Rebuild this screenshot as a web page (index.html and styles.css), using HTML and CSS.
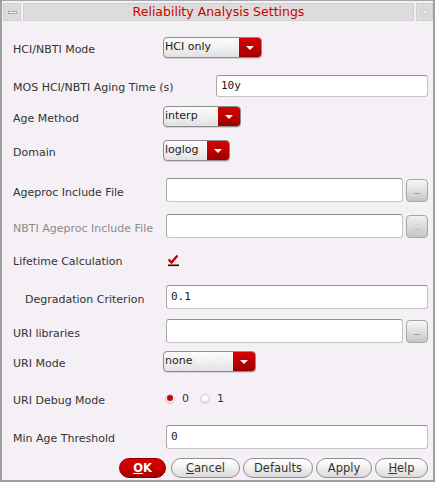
FILE: index.html
```html
<!DOCTYPE html>
<html>
<head>
<meta charset="utf-8">
<link rel="stylesheet" href="styles.css">
</head>
<body>
<div class="window">
  <div class="titlebar">
    <div class="tb-btn tb-min"><span class="dash"></span></div>
    <div class="tb-title">Reliability Analysis Settings</div>
    <div class="tb-btn tb-close">
      <svg width="12" height="12" viewBox="0 0 12 12"><path d="M2 2 L10 10 M10 2 L2 10" stroke="#c4c4c4" stroke-width="3" stroke-dasharray="1.5 1" fill="none"/><path d="M2 2 L10 10 M10 2 L2 10" stroke="#f2f2f2" stroke-width="1" fill="none"/></svg>
    </div>
  </div>
  <div class="form">
    <div class="label">HCI/NBTI Mode</div>
    <div class="ctl"><div class="combo w-hci"><span class="combo-text">HCI only</span><span class="combo-arrow"></span></div></div>

    <div class="label">MOS HCI/NBTI Aging Time (s)</div>
    <div class="ctl"><div class="field field-narrow">10y</div></div>

    <div class="label">Age Method</div>
    <div class="ctl"><div class="combo w-interp"><span class="combo-text">interp</span><span class="combo-arrow"></span></div></div>

    <div class="label">Domain</div>
    <div class="ctl"><div class="combo w-loglog"><span class="combo-text">loglog</span><span class="combo-arrow"></span></div></div>

    <div class="label">Ageproc Include File</div>
    <div class="ctl"><div class="field field-browse"></div><div class="browse">...</div></div>

    <div class="label disabled">NBTI Ageproc Include File</div>
    <div class="ctl"><div class="field field-browse"></div><div class="browse browse-dis">...</div></div>

    <div class="label">Lifetime Calculation</div>
    <div class="ctl"><svg class="check" width="13" height="13" viewBox="0 0 13 13"><path d="M1.5 5.5 L4.5 8.5 L10.5 1.5" stroke="#d00000" stroke-width="2.4" fill="none"/><rect x="1" y="10.5" width="11" height="1.6" fill="#3a0000"/></svg></div>

    <div class="label indent">Degradation Criterion</div>
    <div class="ctl"><div class="field field-full">0.1</div></div>

    <div class="label">URI libraries</div>
    <div class="ctl"><div class="field field-browse"></div><div class="browse">...</div></div>

    <div class="label">URI Mode</div>
    <div class="ctl"><div class="combo w-none"><span class="combo-text">none</span><span class="combo-arrow"></span></div></div>

    <div class="label">URI Debug Mode</div>
    <div class="ctl radios">
      <span class="radio on"></span><span class="rlabel">0</span>
      <span class="radio"></span><span class="rlabel">1</span>
    </div>

    <div class="label">Min Age Threshold</div>
    <div class="ctl"><div class="field field-full">0</div></div>

    <div class="buttons">
      <div class="btn btn-ok"><u>O</u>K</div>
      <div class="btn btn-cancel"><u>C</u>ancel</div>
      <div class="btn btn-defaults">Defaults</div>
      <div class="btn btn-apply">Apply</div>
      <div class="btn btn-help"><u>H</u>elp</div>
    </div>
  </div>
</div>
</body>
</html>
```
FILE: styles.css
```css
* { box-sizing: border-box; }
html, body { margin: 0; padding: 0; }
body {
  width: 435px;
  height: 482px;
  overflow: hidden;
  font-family: "DejaVu Sans", sans-serif;
  font-size: 11px;
  color: #333333;
  background: #f4f0f6;
}
.window {
  width: 435px;
  height: 482px;
  border-top: 1px solid #a6a6a6;
  border-left: 2px solid #a0a0a0;
  border-right: 2px solid #a0a0a0;
  border-bottom: 2px solid #a0a0a0;
  background: #f4f0f6;
  display: flex;
  flex-direction: column;
  overflow: hidden;
}
.titlebar {
  height: 20px;
  display: flex;
  gap: 2px;
  padding: 2px 0 0 1px;
  background: #f4f0f6;
  flex: none;
}
.tb-btn, .tb-title {
  background: #dcdcdc;
  border: 1px solid #d0d0d0;
  height: 18px;
}
.tb-btn {
  width: 18px;
  display: flex;
  align-items: center;
  justify-content: center;
}
.tb-min { width: 18px; }
.tb-close { width: 17px; }
.dash {
  width: 9px;
  height: 3px;
  background: #f6f6f6;
  border: 1px solid #a8a8a8;
}
.tb-title {
  flex: 1;
  text-align: center;
  color: #cc0000;
  font-size: 12.5px;
  line-height: 16px;
}
.form {
  flex: 1;
  display: grid;
  grid-template-columns: 150px 1fr;
  grid-template-rows: 42px 35px 27px 41px 38px 34px 33px 42px 26px 34px 40px 37px 26px;
  padding: 5px 5px 0 11px;
}
.label {
  align-self: center;
  padding-top: 4px;
  white-space: nowrap;
  color: #333333;
}
.label.disabled { color: #8c8c8c; }
.label.indent { padding-left: 12px; }
.ctl {
  display: flex;
  align-items: center;
  min-width: 0;
}
.combo {
  height: 21px;
  border: 1px solid #8c8c8c;
  border-radius: 4px;
  display: flex;
  overflow: hidden;
  background:
    repeating-linear-gradient(45deg, rgba(0,0,0,0.025) 0 1px, transparent 1px 2px),
    linear-gradient(#ffffff, #f3f3f3 50%, #e4e4e4);
  box-shadow: 0 1px 0 rgba(0,0,0,0.12);
}
.combo-text {
  flex: 1;
  padding-left: 1px;
  line-height: 18px;
  font-size: 11px;
  color: #1a1a1a;
}
.combo-arrow {
  width: 22px;
  position: relative;
  background: linear-gradient(#d90000, #b80000 60%, #9a0000);
}
.combo-arrow::after {
  content: "";
  position: absolute;
  left: 7px;
  top: 8px;
  border-left: 4px solid transparent;
  border-right: 4px solid transparent;
  border-top: 4px solid #ffffff;
}
.w-hci { width: 99px; }
.w-interp { width: 78px; }
.w-loglog { width: 67px; }
.w-none { width: 93px; }
.field {
  height: 24px;
  background: #ffffff;
  border: 1px solid #c4c4c4;
  border-top-color: #8e8e8e;
  border-left-color: #a8a8a8;
  border-radius: 3px;
  font-family: "DejaVu Sans Mono", monospace;
  font-size: 11px;
  color: #1a1a1a;
  line-height: 22px;
  padding-left: 4px;
  margin-left: 3px;
}
.field-narrow { margin-left: 53px; flex: 1; height: 22px; line-height: 20px; }
.field-full { flex: 1; }
.field-browse { flex: 1; }
.browse {
  width: 22px;
  height: 23px;
  margin-left: 3px;
  border: 1px solid #a6a6a6;
  border-radius: 4px;
  background: linear-gradient(#f6f6f6, #dedede 55%, #c4c4c4);
  font-size: 8px;
  color: #5a5a5a;
  text-align: center;
  line-height: 24px;
}
.browse-dis { color: #a0a0a0; background: linear-gradient(#f0f0f0, #d8d8d8 55%, #c6c6c6); }
.check { margin-left: 4px; margin-top: 1px; }
.radios { gap: 0; padding-top: 1px; }
.radio {
  width: 10px;
  height: 10px;
  border-radius: 50%;
  margin-left: 2px;
  background: radial-gradient(circle at 50% 35%, #ffffff 30%, #e6e6e6 65%, #b4b4b4 100%);
  border: 1px solid #d2d2d2;
  position: relative;
}
.radio.on::after {
  content: "";
  position: absolute;
  left: 1px;
  top: 0px;
  width: 6px;
  height: 6px;
  border-radius: 50%;
  background: #cc0000;
}
.rlabel {
  margin-left: 7px;
  margin-right: 9px;
  color: #333333;
}
.buttons {
  grid-column: 1 / 3;
  display: flex;
  justify-content: flex-end;
  align-items: center;
  gap: 3px;
}
.btn {
  height: 20px;
  border-radius: 10px;
  border: 1px solid #8e8e8e;
  background: linear-gradient(#ffffff, #f2f2f2 45%, #dadada);
  text-align: center;
  line-height: 18px;
  color: #333333;
  font-size: 11.5px;
}
.btn-ok {
  width: 47px;
  margin-right: 2px;
  background: linear-gradient(#e00000, #c40000 50%, #a00000);
  border-color: #8a0000;
  color: #ffffff;
  font-weight: bold;
}
.btn-cancel { width: 69px; }
.btn-defaults { width: 70px; }
.btn-apply { width: 56px; }
.btn-help { width: 53px; }
```
